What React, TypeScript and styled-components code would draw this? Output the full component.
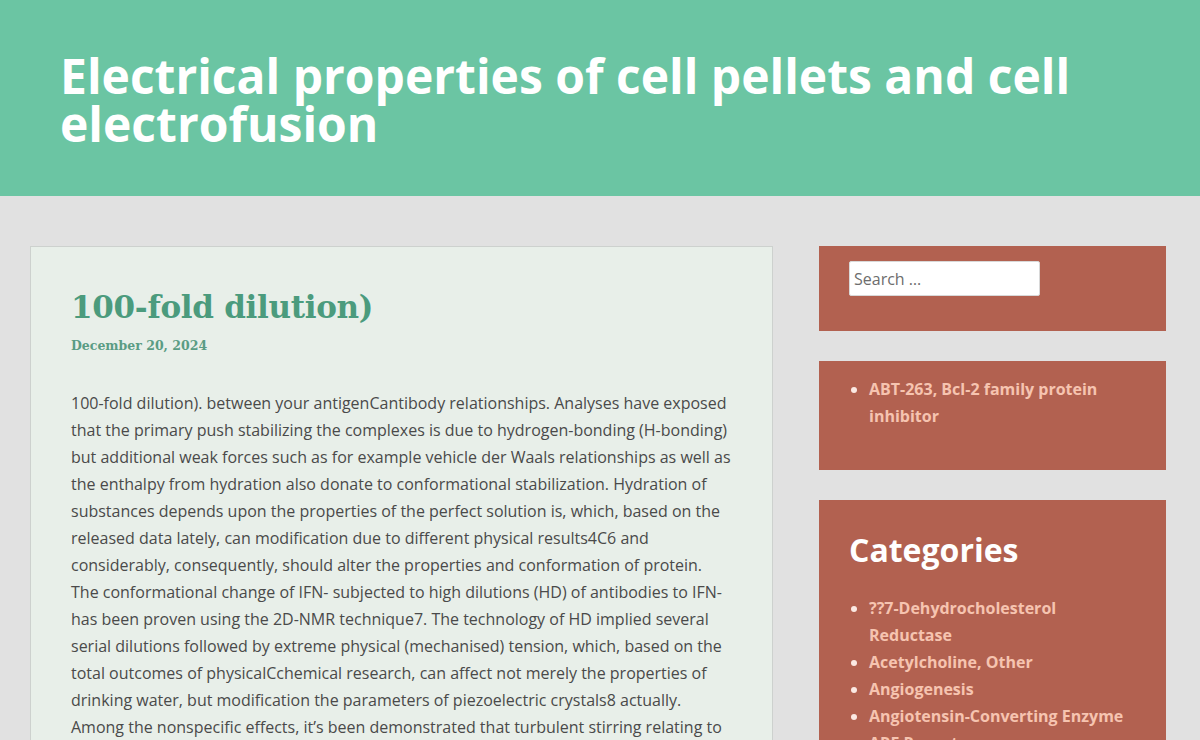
import React from "react";
import styled, { createGlobalStyle } from "styled-components";

const GlobalStyle = createGlobalStyle`
    html, body {
        margin: 0;
        padding: 0;
        background: #e1e1e1;
        font-family: "Open Sans", "Liberation Sans", sans-serif;
    }
`;

const SiteHeader = styled.header`
    background: #6bc5a3;
    height: 196px;
    box-sizing: border-box;
    padding: 52px 60px 0 60px;
`;

const SiteTitle = styled.h1`
    margin: 0;
    font-size: 48px;
    line-height: 48px;
    font-weight: 700;
    color: #ffffff;
`;

const Layout = styled.div`
    display: grid;
    grid-template-columns: 743px 347px;
    column-gap: 46px;
    padding: 50px 0 0 30px;
    align-items: start;
`;

const Article = styled.article`
    background: #e8efe9;
    border: 1px solid #cdd1ce;
    padding: 38px 40px 40px 40px;
    min-height: 600px;
`;

const PostTitle = styled.h2`
    margin: 0;
    font-family: "DejaVu Serif", "Liberation Serif", serif;
    font-size: 31px;
    line-height: 44px;
    font-weight: 700;
    color: #4b9b7d;
    letter-spacing: -0.3px;
`;

const PostDate = styled.div`
    margin-top: 9px;
    font-family: "DejaVu Serif", "Liberation Serif", serif;
    font-size: 12.5px;
    font-weight: 700;
    color: #5a9c84;
`;

const PostBody = styled.p`
    margin: 37px 0 0 0;
    font-size: 16px;
    line-height: 27px;
    color: #4a4a4a;
`;

const Sidebar = styled.aside`
    display: flex;
    flex-direction: column;
    gap: 30px;
`;

const Widget = styled.section<{ $pad?: string }>`
    background: #b26150;
    padding: ${({ $pad }) => $pad ?? "15px 30px 40px 30px"};
`;

const SearchField = styled.input`
    display: block;
    width: 191px;
    height: 35px;
    box-sizing: border-box;
    border: 1px solid #d8d8d8;
    border-radius: 2px;
    padding: 0 4px;
    font-family: "Open Sans", sans-serif;
    font-size: 16px;
    color: #555;
    background: #fff;

    &::placeholder {
        color: #6d6d6d;
    }
`;

const WidgetTitle = styled.h3`
    margin: 0 0 25px 0;
    font-size: 32px;
    line-height: 40px;
    font-weight: 700;
    color: #ffffff;
`;

const LinkList = styled.ul`
    margin: 0;
    padding: 0 0 0 20px;
    color: #fbe9e3;
`;

const LinkItem = styled.li`
    font-size: 16px;
    line-height: 27px;
    font-weight: 700;

    a {
        color: #f6c4b0;
        text-decoration: none;
    }
`;

const recentPosts = ["ABT-263, Bcl-2 family protein inhibitor"];

const categories = [
    "??7-Dehydrocholesterol Reductase",
    "Acetylcholine, Other",
    "Angiogenesis",
    "Angiotensin-Converting Enzyme",
    "ARF Receptors",
    "Calcium Channels",
];

const body =
    "100-fold dilution). between your antigenCantibody relationships. Analyses have exposed that the primary push stabilizing the complexes is due to hydrogen-bonding (H-bonding) but additional weak forces such as for example vehicle der Waals relationships as well as the enthalpy from hydration also donate to conformational stabilization. Hydration of substances depends upon the properties of the perfect solution is, which, based on the released data lately, can modification due to different physical results4C6 and considerably, consequently, should alter the properties and conformation of protein. The conformational change of IFN- subjected to high dilutions (HD) of antibodies to IFN- has been proven using the 2D-NMR technique7. The technology of HD implied several serial dilutions followed by extreme physical (mechanised) tension, which, based on the total outcomes of physicalCchemical research, can affect not merely the properties of drinking water, but modification the parameters of piezoelectric crystals8 actually. Among the nonspecific effects, it\u2019s been demonstrated that turbulent stirring relating to the technology of HD can alter the properties of the solution.";

export default function App() {
    return (
        <>
            <GlobalStyle />
            <SiteHeader>
                <SiteTitle>Electrical properties of cell pellets and cell electrofusion</SiteTitle>
            </SiteHeader>
            <Layout>
                <Article>
                    <PostTitle>100-fold dilution)</PostTitle>
                    <PostDate>December 20, 2024</PostDate>
                    <PostBody>{body}</PostBody>
                </Article>
                <Sidebar>
                    <Widget $pad="15px 30px 35px 30px">
                        <SearchField type="search" placeholder="Search …" />
                    </Widget>
                    <Widget>
                        <LinkList>
                            {recentPosts.map((p) => (
                                <LinkItem key={p}>
                                    <a href="#">{p}</a>
                                </LinkItem>
                            ))}
                        </LinkList>
                    </Widget>
                    <Widget $pad="30px 30px 38px 30px">
                        <WidgetTitle>Categories</WidgetTitle>
                        <LinkList>
                            {categories.map((c) => (
                                <LinkItem key={c}>
                                    <a href="#">{c}</a>
                                </LinkItem>
                            ))}
                        </LinkList>
                    </Widget>
                </Sidebar>
            </Layout>
        </>
    );
}
